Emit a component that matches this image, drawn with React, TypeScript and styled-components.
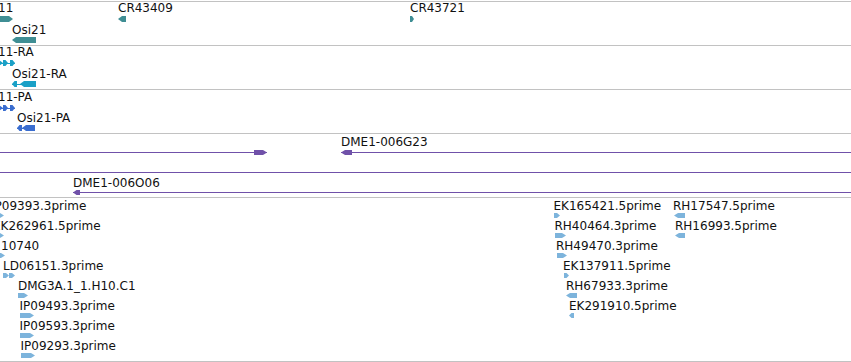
import styled, { createGlobalStyle } from 'styled-components';

type Dir = 'r' | 'l' | 'n';
type Part = [number, number, Dir];

interface Feature {
  label?: string;
  lx?: number;
  ly?: number;
  gy: number;
  h: number;
  parts: Part[];
  line?: [number, number];
}

interface TrackData {
  height: number;
  color: string;
  features: Feature[];
}

const arrow = (x0: number, x1: number, y: number, h: number, dir: Dir) => {
  const t = Math.min(4, (x1 - x0) / 2);
  const m = y + h / 2;
  if (dir === 'r') {
    return `${x0},${y} ${x1 - t},${y} ${x1},${m} ${x1 - t},${y + h} ${x0},${y + h}`;
  }
  if (dir === 'l') {
    return `${x0},${m} ${x0 + t},${y} ${x1},${y} ${x1},${y + h} ${x0 + t},${y + h}`;
  }
  return `${x0},${y} ${x1},${y} ${x1},${y + h} ${x0},${y + h}`;
};

const tracks: TrackData[] = [
  {
    height: 43,
    color: '#3f8e94',
    features: [
      { label: '11', lx: -2, ly: 0, gy: 14, h: 6, parts: [[-12, 13, 'r']] },
      { label: 'CR43409', lx: 118, ly: 0, gy: 14, h: 6, parts: [[118, 126, 'l']] },
      { label: 'CR43721', lx: 410, ly: 0, gy: 14, h: 6, parts: [[410, 414, 'r']] },
      {
        label: 'Osi21', lx: 12, ly: 22, gy: 35, h: 6,
        parts: [[12, 20, 'l'], [20, 36, 'n']],
      },
    ],
  },
  {
    height: 43,
    color: '#1aa0c6',
    features: [
      {
        label: '11-RA', lx: -2, ly: 0, gy: 14, h: 6, line: [-10, 15],
        parts: [[-6, 3, 'r'], [3, 8, 'r'], [10, 15, 'r']],
      },
      {
        label: 'Osi21-RA', lx: 12, ly: 22, gy: 35, h: 6, line: [12, 36],
        parts: [[12, 17, 'l'], [20, 36, 'l']],
      },
    ],
  },
  {
    height: 43,
    color: '#3a6dcf',
    features: [
      {
        label: '11-PA', lx: -2, ly: 1, gy: 15, h: 6, line: [-10, 15],
        parts: [[-6, 3, 'r'], [3, 8, 'r'], [10, 15, 'r']],
      },
      {
        label: 'Osi21-PA', lx: 17, ly: 22, gy: 35, h: 6, line: [17, 35],
        parts: [[17, 22, 'l'], [22, 35, 'l']],
      },
    ],
  },
  {
    height: 63,
    color: '#7051a9',
    features: [
      { gy: 16, h: 5, line: [-10, 267], parts: [[254, 267, 'r']] },
      { label: 'DME1-006G23', lx: 341, ly: 2, gy: 16, h: 5, line: [341, 860], parts: [[341, 352, 'l']] },
      { gy: 36, h: 5, line: [-10, 860], parts: [] },
      { label: 'DME1-006O06', lx: 73, ly: 43, gy: 56, h: 5, line: [73, 860], parts: [[73, 80, 'l']] },
    ],
  },
];

interface Est {
  label: string;
  x: number;
  row: number;
  parts: Part[];
}

const ests: Est[] = [
  { label: 'IP09393.3prime', x: -9, row: 0, parts: [[-10, 4, 'r']] },
  { label: 'EK262961.5prime', x: -7, row: 1, parts: [[-10, 4, 'r']] },
  { label: '10740', x: 1, row: 2, parts: [[-10, 5, 'r']] },
  { label: 'LD06151.3prime', x: 3, row: 3, parts: [[3, 9, 'r'], [9, 15, 'r']] },
  { label: 'DMG3A.1_1.H10.C1', x: 18, row: 4, parts: [[18, 28, 'r']] },
  { label: 'IP09493.3prime', x: 19.5, row: 5, parts: [[20, 34, 'r']] },
  { label: 'IP09593.3prime', x: 19.5, row: 6, parts: [[20, 34, 'r']] },
  { label: 'IP09293.3prime', x: 20.5, row: 7, parts: [[21, 35, 'r']] },
  { label: 'EK165421.5prime', x: 553.5, row: 0, parts: [[554, 560, 'r']] },
  { label: 'RH17547.5prime', x: 673, row: 0, parts: [[674, 685, 'l']] },
  { label: 'RH40464.3prime', x: 554.5, row: 1, parts: [[555, 566, 'r']] },
  { label: 'RH16993.5prime', x: 675, row: 1, parts: [[675, 685, 'l']] },
  { label: 'RH49470.3prime', x: 556, row: 2, parts: [[557, 567, 'r']] },
  { label: 'EK137911.5prime', x: 563, row: 3, parts: [[564, 569, 'r']] },
  { label: 'RH67933.3prime', x: 566, row: 4, parts: [[566, 577, 'l']] },
  { label: 'EK291910.5prime', x: 569, row: 5, parts: [[569, 574, 'l']] },
];

const estTrack: TrackData = {
  height: 163,
  color: '#7db4dc',
  features: ests.map((e) => ({
    label: e.label,
    lx: e.x,
    ly: 2 + e.row * 20,
    gy: 15 + e.row * 20,
    h: 5,
    parts: e.parts,
  })),
};

function Track({ data }: { data: TrackData }) {
  return (
    <TrackBox $height={data.height}>
      <GlyphLayer width={851} height={data.height}>
        {data.features.map((f, i) => (
          <g key={i} fill={data.color}>
            {f.line && (
              <IntronLine x={f.line[0]} y={f.gy + Math.floor(f.h / 2)} width={f.line[1] - f.line[0]} height={1} />
            )}
            {f.parts.map((p, j) => (
              <polygon key={j} points={arrow(p[0], p[1], f.gy, f.h, p[2])} />
            ))}
          </g>
        ))}
      </GlyphLayer>
      {data.features
        .filter((f) => f.label)
        .map((f, i) => (
          <Label key={i} $x={f.lx ?? 0} $y={f.ly ?? 0}>
            {f.label}
          </Label>
        ))}
    </TrackBox>
  );
}

function App() {
  return (
    <>
      <GlobalStyle />
      <Browser>
        {tracks.map((t, i) => (
          <Track key={i} data={t} />
        ))}
        <Track data={estTrack} />
      </Browser>
    </>
  );
}

const GlobalStyle = createGlobalStyle`
  html, body {
    margin: 0;
    padding: 0;
    background: #fff;
  }
  body {
    font-family: "DejaVu Sans", "Noto Sans", sans-serif;
  }
`;

const Browser = styled.div`
  width: 851px;
  padding-top: 1px;
  display: flex;
  flex-direction: column;
  border-bottom: 1px solid #c2c2c2;
  overflow: hidden;
`;

const TrackBox = styled.div<{ $height: number }>`
  position: relative;
  height: ${(p) => p.$height}px;
  border-top: 1px solid #c2c2c2;
  overflow: hidden;
`;

const GlyphLayer = styled.svg`
  position: absolute;
  left: 0;
  top: 0;
  display: block;
`;

const IntronLine = styled.rect`
  shape-rendering: crispEdges;
`;

const Label = styled.div.attrs<{ $x: number; $y: number }>((p) => ({
  style: { left: p.$x, top: p.$y },
}))<{ $x: number; $y: number }>`
  position: absolute;
  font-size: 12px;
  line-height: 12px;
  color: #111;
  white-space: nowrap;
`;

export default App;
